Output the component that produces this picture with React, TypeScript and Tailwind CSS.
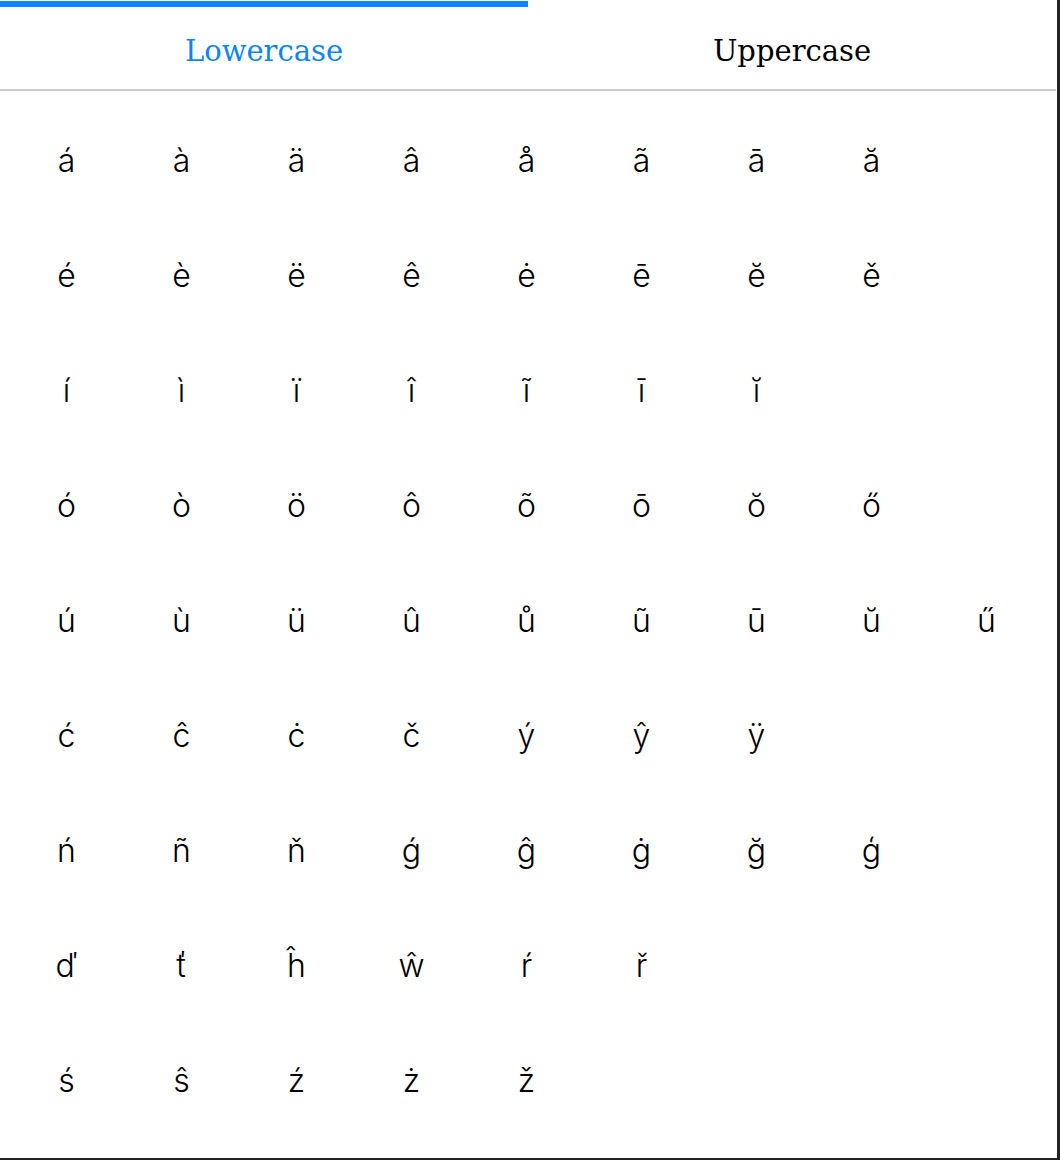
import { useState } from "react";

const lowerRows: string[][] = [
  ["á", "à", "ä", "â", "å", "ã", "ā", "ă"],
  ["é", "è", "ë", "ê", "ė", "ē", "ĕ", "ě"],
  ["í", "ì", "ï", "î", "ĩ", "ī", "ĭ"],
  ["ó", "ò", "ö", "ô", "õ", "ō", "ŏ", "ő"],
  ["ú", "ù", "ü", "û", "ů", "ũ", "ū", "ŭ", "ű"],
  ["ć", "ĉ", "ċ", "č", "ý", "ŷ", "ÿ"],
  ["ń", "ñ", "ň", "ǵ", "ĝ", "ġ", "ğ", "ģ"],
  ["ď", "ť", "ĥ", "ŵ", "ŕ", "ř"],
  ["ś", "ŝ", "ź", "ż", "ž"],
];

export default function App() {
  const [tab, setTab] = useState<"lower" | "upper">("lower");
  const rows =
    tab === "lower"
      ? lowerRows
      : lowerRows.map((r) => r.map((c) => c.toUpperCase()));

  return (
    <div className="w-[1060px] h-[1160px] bg-[#232325] flex">
      <div className="w-[1057px] h-[1158px] bg-white flex flex-col">
        <div className="flex h-[91px] border-b-2 border-[#c9c9c9] w-[1056px] font-['DejaVu_Serif',serif] text-[29px]">
          {(["lower", "upper"] as const).map((t) => (
            <button
              key={t}
              onClick={() => setTab(t)}
              className={
                "flex-1 flex flex-col " +
                (tab === t ? "text-[#0a85ff]" : "text-black")
              }
            >
              <div
                className={
                  "mt-px h-[6px] w-full " + (tab === t ? "bg-[#0a85ff]" : "")
                }
              />
              <div className="flex-1 flex items-center justify-center pt-[8px]">
                {t === "lower" ? "Lowercase" : "Uppercase"}
              </div>
            </button>
          ))}
        </div>
        <div className="pl-[9px] pt-[12px] flex flex-col font-['Inter',sans-serif] font-light text-[32px] text-black">
          {rows.map((row, i) => (
            <div key={i} className="flex">
              {row.map((c) => (
                <div
                  key={c}
                  className="w-[115px] h-[115px] flex items-center justify-center"
                >
                  {c}
                </div>
              ))}
            </div>
          ))}
        </div>
      </div>
    </div>
  );
}
